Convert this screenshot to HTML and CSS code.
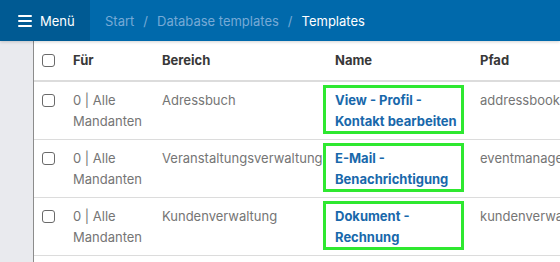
FILE: index.html
```html
<!DOCTYPE html>
<html lang="de">
<head>
  <meta charset="UTF-8">
  <title>Templates</title>
  <link rel="stylesheet" href="styles.css">
</head>
<body>
  <header class="topbar">
    <div class="menu-toggle">
      <span class="burger"><i></i><i></i><i></i></span>
      <span>Menü</span>
    </div>
    <nav class="crumbs">
      <a href="#">Start</a>
      <span class="sep">/</span>
      <a href="#">Database templates</a>
      <span class="sep">/</span>
      <span class="current">Templates</span>
    </nav>
  </header>

  <div class="layout">
    <aside class="sidebar"></aside>
    <main class="content">
      <table class="grid">
        <colgroup>
          <col class="c-check">
          <col class="c-for">
          <col class="c-area">
          <col class="c-name">
          <col class="c-path">
        </colgroup>
        <thead>
          <tr>
            <th class="check"><span class="box"></span></th>
            <th>Für</th>
            <th>Bereich</th>
            <th>Name</th>
            <th>Pfad</th>
          </tr>
        </thead>
        <tbody>
          <tr>
            <td class="check"><span class="box"></span></td>
            <td>0 | Alle Mandanten</td>
            <td>Adressbuch</td>
            <td class="name marked"><a href="#">View - Profil - Kontakt bearbeiten</a></td>
            <td class="path">addressbook/views/profile/edit</td>
          </tr>
          <tr>
            <td class="check"><span class="box"></span></td>
            <td>0 | Alle Mandanten</td>
            <td>Veranstaltungsverwaltung</td>
            <td class="name marked"><a href="#">E-Mail - Benachrichtigung</a></td>
            <td class="path">eventmanagement/mail/notification</td>
          </tr>
          <tr>
            <td class="check"><span class="box"></span></td>
            <td>0 | Alle Mandanten</td>
            <td>Kundenverwaltung</td>
            <td class="name marked"><a href="#">Dokument - Rechnung</a></td>
            <td class="path">kundenverwaltung/documents/invoice</td>
          </tr>
        </tbody>
      </table>
    </main>
  </div>
</body>
</html>
```

FILE: styles.css
```css
html,
body {
  margin: 0;
  height: 100%;
}

body {
  font-family: Inter, "Noto Sans", sans-serif;
  font-size: 13px;
  overflow: hidden;
  background: #fff;
}

/* top bar */
.topbar {
  display: flex;
  height: 41px;
  background-color: #0069ab;
  color: #fff;
  box-shadow: 0 1px 3px rgba(0, 0, 0, 0.18);
  position: relative;
  z-index: 2;
}

.menu-toggle {
  display: flex;
  align-items: center;
  gap: 8px;
  width: 90px;
  box-sizing: border-box;
  padding-left: 18px;
  background-color: #005a93;
}

.burger {
  display: flex;
  flex-direction: column;
  gap: 3px;
  width: 14px;
}

.burger i {
  display: block;
  height: 2px;
  background: #fff;
  border-radius: 1px;
}

.crumbs {
  display: flex;
  align-items: center;
  padding-left: 15px;
  white-space: nowrap;
}

.crumbs a {
  color: #76aad6;
  text-decoration: none;
}

.crumbs .sep {
  color: #76aad6;
  margin: 0 9px;
}

.crumbs .current {
  color: #fff;
}

/* layout */
.layout {
  display: flex;
  height: calc(100% - 41px);
}

.sidebar {
  width: 33px;
  flex: none;
  background-color: #e9eaee;
  border-right: 1px solid #8c8c8c;
}

.content {
  flex: 1;
  overflow: hidden;
}

/* table */
.grid {
  border-collapse: collapse;
  table-layout: fixed;
  width: 620px;
  line-height: 21px;
}

.c-check { width: 27px; }
.c-for { width: 89px; }
.c-area { width: 173px; }
.c-name { width: 145px; }
.c-path { width: 186px; }

.grid th,
.grid td {
  text-align: left;
  vertical-align: top;
  padding: 8px 6px 7px 12px;
}

.grid th {
  padding-top: 9px;
  padding-bottom: 9px;
  color: #383838;
  font-weight: 700;
  border-bottom: 2px solid #dcdcdc;
}

.grid td {
  color: #757575;
  border-bottom: 1px solid #dcdcdc;
}

.grid .check {
  padding-left: 8px;
  padding-right: 0;
}

.box {
  display: inline-block;
  width: 11px;
  height: 11px;
  border: 1px solid #6a6a6a;
  border-radius: 3px;
  vertical-align: -2px;
}

.name a {
  color: #1868ab;
  font-weight: 700;
  text-decoration: none;
}

.path {
  white-space: nowrap;
  overflow: hidden;
}

.marked {
  position: relative;
}

.marked::after {
  content: "";
  position: absolute;
  top: 3px;
  left: 0;
  right: 4px;
  bottom: 5px;
  border: 3px solid #2ee830;
  pointer-events: none;
}
```
